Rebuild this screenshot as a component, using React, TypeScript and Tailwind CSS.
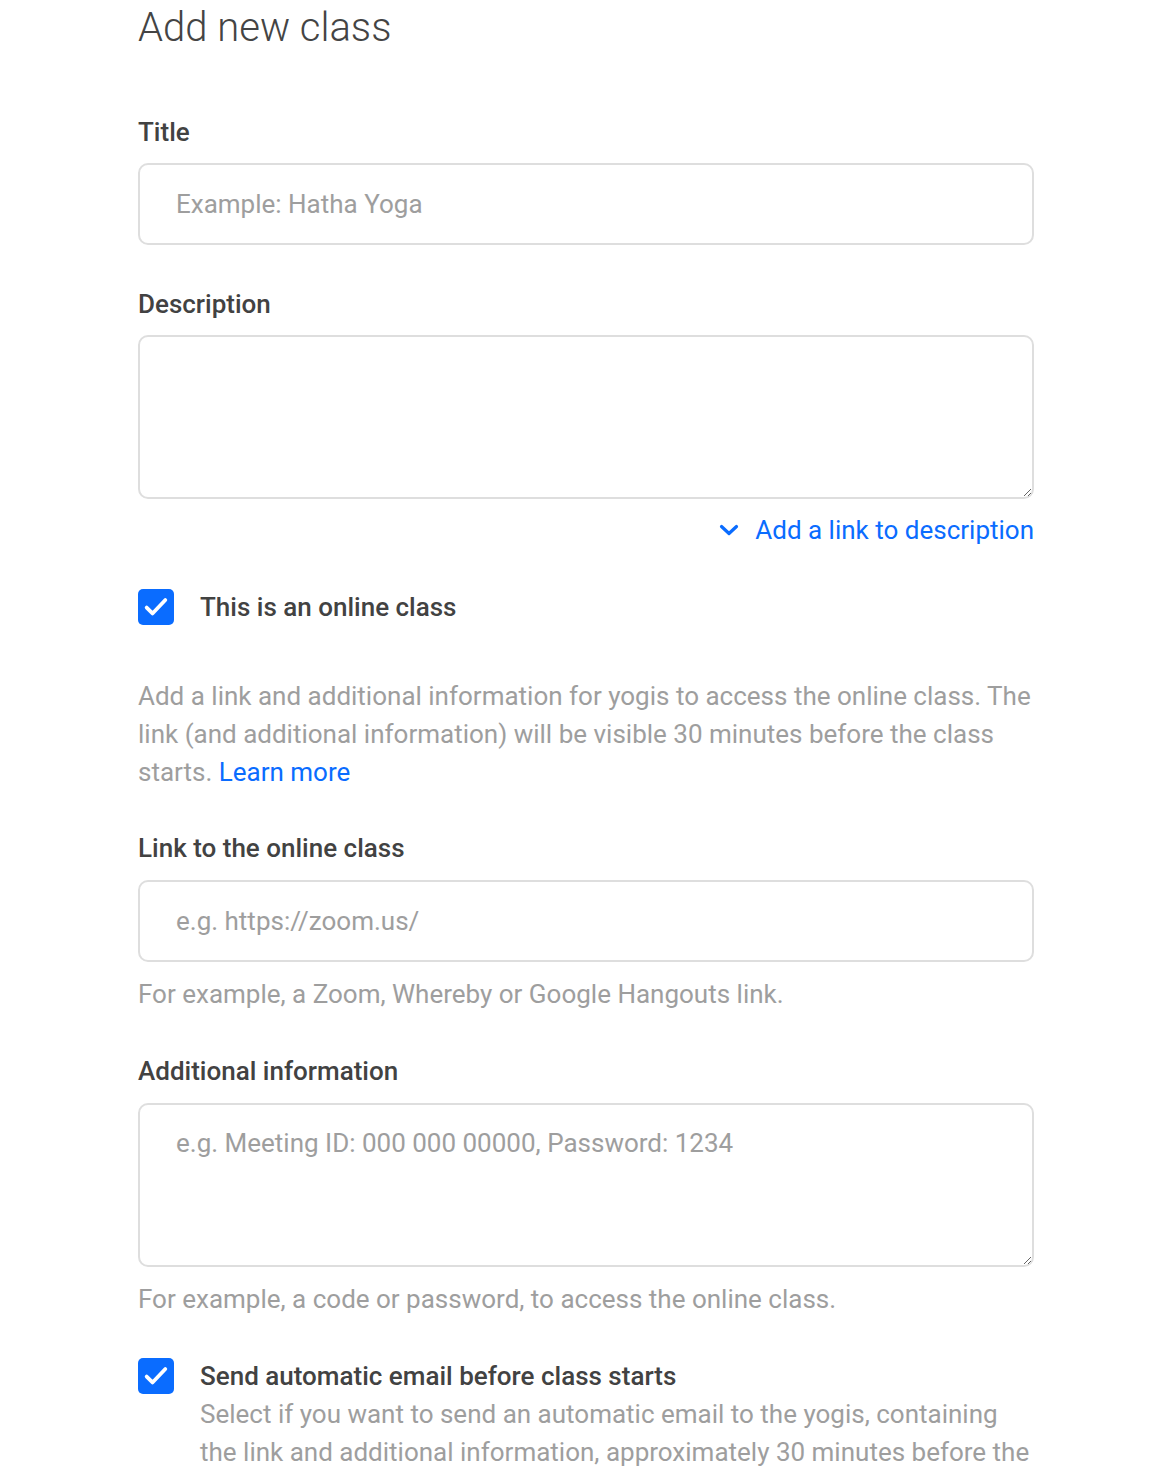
import React from "react";

const font = { fontFamily: "Roboto, 'Noto Sans', sans-serif" };

function CheckBox() {
  return (
    <div className="flex h-9 w-9 shrink-0 items-center justify-center rounded-[5px] bg-[#0a6cff]">
      <svg width="28" height="28" viewBox="0 0 24 24" fill="none">
        <path d="M4 12.5l5 5L20 6" stroke="white" strokeWidth="3.2" strokeLinecap="round" strokeLinejoin="round" />
      </svg>
    </div>
  );
}

function Label({ children }: { children: React.ReactNode }) {
  return <label className="block text-[26px] leading-[32px] font-medium text-[#424242]">{children}</label>;
}

const inputCls =
  "block h-[82px] w-full rounded-[10px] border-2 border-[#dedede] bg-white px-9 text-[26px] text-[#424242] outline-none placeholder:text-[#9e9e9e]";
const areaCls =
  "block h-[164px] w-full rounded-[10px] border-2 border-[#dedede] bg-white px-9 pt-[22px] text-[26px] leading-[32px] text-[#424242] outline-none placeholder:text-[#9e9e9e]";

export default function App() {
  return (
    <div className="min-h-screen bg-white" style={font}>
      <div className="ml-[138px] w-[896px] pt-[4px] pb-10">
        <h1 className="text-[40px] leading-[48px] font-light text-[#444]">Add new class</h1>

        <div className="mt-16">
          <Label>Title</Label>
          <input className={`${inputCls} mt-[15px]`} placeholder="Example: Hatha Yoga" />
        </div>

        <div className="mt-[43px]">
          <Label>Description</Label>
          <textarea className={`${areaCls} mt-[15px]`} />
          <div className="mt-[15px] flex justify-end">
            <a className="flex items-center gap-4 text-[26px] leading-[32px] text-[#0a6cff]">
              <svg width="20" height="14" viewBox="0 0 20 14" fill="none">
                <path d="M2.5 3.5l7.5 7 7.5-7" stroke="#0a6cff" strokeWidth="3.2" strokeLinecap="round" strokeLinejoin="round" />
              </svg>
              Add a link to description
            </a>
          </div>
        </div>

        <div className="mt-[43px] flex items-center gap-[26px]">
          <CheckBox />
          <span className="text-[26px] leading-[36px] font-medium text-[#424242]">This is an online class</span>
        </div>

        <p className="mt-[52px] text-[26px] leading-[38px] text-[#9e9e9e]">
          Add a link and additional information for yogis to access the online class. The link (and additional
          information) will be visible 30 minutes before the class starts.{" "}
          <a className="text-[#0a6cff]">Learn more</a>
        </p>

        <div className="mt-[41px]">
          <Label>Link to the online class</Label>
          <input className={`${inputCls} mt-4`} placeholder="e.g. https://zoom.us/" />
          <p className="mt-4 text-[26px] leading-[32px] text-[#9e9e9e]">
            For example, a Zoom, Whereby or Google Hangouts link.
          </p>
        </div>

        <div className="mt-[45px]">
          <Label>Additional information</Label>
          <textarea className={`${areaCls} mt-4`} placeholder="e.g. Meeting ID: 000 000 00000, Password: 1234" />
          <p className="mt-4 text-[26px] leading-[32px] text-[#9e9e9e]">
            For example, a code or password, to access the online class.
          </p>
        </div>

        <div className="mt-[43px] flex items-start gap-[26px]">
          <CheckBox />
          <div className="-mt-px">
            <div className="text-[26px] leading-[38px] font-medium text-[#424242]">
              Send automatic email before class starts
            </div>
            <p className="text-[26px] leading-[38px] text-[#9e9e9e]">
              Select if you want to send an automatic email to the yogis, containing the link and additional
              information, approximately 30 minutes before the class starts.
            </p>
          </div>
        </div>
      </div>
    </div>
  );
}
